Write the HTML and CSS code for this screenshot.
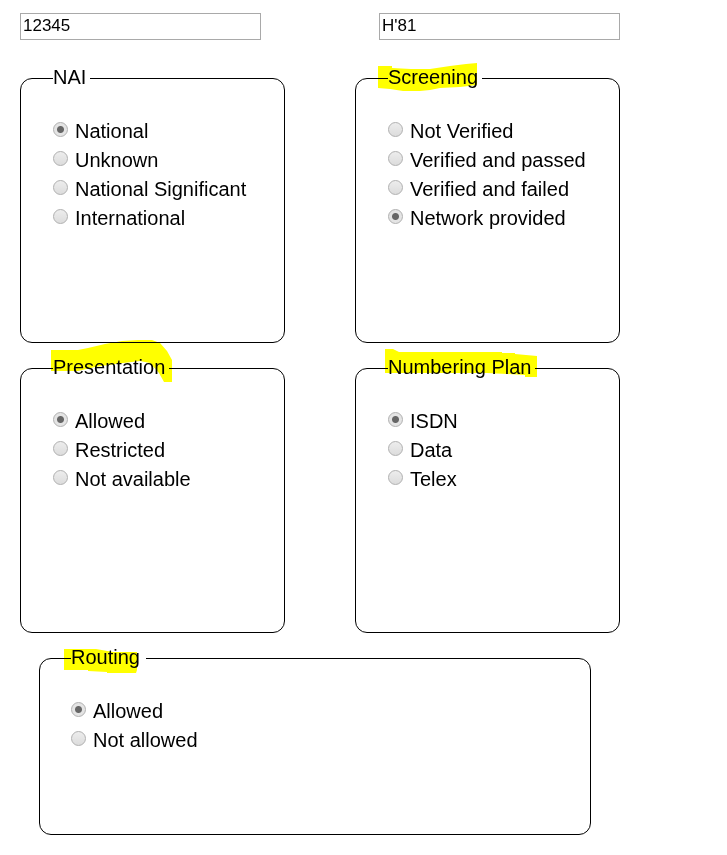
FILE: index.html
```html
<!DOCTYPE html>
<html lang="en">
<head>
<meta charset="utf-8">
<title>Number settings</title>
<link rel="stylesheet" href="styles.css">
</head>
<body>
<form class="settings">
  <div class="numbers">
    <input class="number" type="text" value="12345" aria-label="Number">
    <input class="number" type="text" value="H'81" aria-label="Code">
  </div>
  <div class="panels">
    <fieldset class="panel">
      <legend>NAI</legend>
      <label><input type="radio" name="nai" checked>National</label>
      <label><input type="radio" name="nai">Unknown</label>
      <label><input type="radio" name="nai">National Significant</label>
      <label><input type="radio" name="nai">International</label>
    </fieldset>
    <fieldset class="panel">
      <legend>Screening
        <svg class="marker" width="130" height="60" viewBox="-10 -20 130 60" aria-hidden="true"><path d="M-9 0H5V2L24 3H43L63 0L79 -2L90 -3V19L73 21L53 22L43 24L33 25H16L3 23L-9 22Z"/></svg>
      </legend>
      <label><input type="radio" name="screening">Not Verified</label>
      <label><input type="radio" name="screening">Verified and passed</label>
      <label><input type="radio" name="screening">Verified and failed</label>
      <label><input type="radio" name="screening" checked>Network provided</label>
    </fieldset>
    <fieldset class="panel">
      <legend>Presentation
        <svg class="marker" width="130" height="60" viewBox="-10 -20 130 60" aria-hidden="true"><path d="M-1 -6H26L36 -8L53 -12L70 -15L86 -16H100L108 -13L115 -5L120 4V26H112L107 17L98 7L88 5L63 8L43 11L26 15H-1Z"/></svg>
      </legend>
      <label><input type="radio" name="presentation" checked>Allowed</label>
      <label><input type="radio" name="presentation">Restricted</label>
      <label><input type="radio" name="presentation">Not available</label>
    </fieldset>
    <fieldset class="panel">
      <legend>Numbering Plan
        <svg class="marker" width="170" height="60" viewBox="-10 -20 170 60" aria-hidden="true"><path d="M-2 -7H6L12 -4H115V-3H128V-2L150 0V21H138V19L120 18L100 17H-2Z"/></svg>
      </legend>
      <label><input type="radio" name="plan" checked>ISDN</label>
      <label><input type="radio" name="plan">Data</label>
      <label><input type="radio" name="plan">Telex</label>
    </fieldset>
  </div>
  <fieldset class="panel routing">
    <legend>Routing
      <svg class="marker" width="130" height="60" viewBox="-10 -20 130 60" aria-hidden="true"><path d="M-6 3H26L43 6H67V24L66 27H37V26L18 25V24H-6Z"/></svg>
    </legend>
    <label><input type="radio" name="routing" checked>Allowed</label>
    <label><input type="radio" name="routing">Not allowed</label>
  </fieldset>
</form>
</body>
</html>
```

FILE: styles.css
```css
* {
  box-sizing: border-box;
}

body {
  margin: 0;
  padding: 13px 20px 20px;
  background: #fff;
  color: #000;
  font-family: "Liberation Sans", Arial, sans-serif;
  font-size: 20px;
}

.settings {
  max-width: 600px;
}

.numbers {
  display: flex;
  justify-content: space-between;
  gap: 20px;
  margin-bottom: 26px;
}

.number {
  flex: 0 1 241px;
  min-width: 0;
  height: 27px;
  padding: 0 2px 2px;
  border: 1px solid #a9a9a9;
  background: #fff;
  color: #000;
  font: 17px "Liberation Sans", Arial, sans-serif;
}

.panels {
  display: grid;
  grid-template-columns: 1fr 1fr;
  gap: 13px 70px;
}

.panel {
  min-width: 0;
  min-height: 277px;
  margin: 0;
  padding: 27px 10px 20px 32px;
  border: 1px solid #000;
  border-radius: 12px;
}

.panel legend {
  position: relative;
  padding: 0 4px 2px 0;
  line-height: 22px;
  white-space: nowrap;
}

.marker {
  position: absolute;
  top: -20px;
  left: -11px;
  fill: #ff0;
  mix-blend-mode: multiply;
  pointer-events: none;
}

.panel label {
  display: flex;
  align-items: center;
  gap: 7px;
  line-height: 29px;
}

.panel input {
  appearance: none;
  flex: none;
  width: 15px;
  height: 15px;
  margin: 0 0 4px;
  border: 1px solid #b0b0b0;
  border-radius: 50%;
  background: linear-gradient(#ededed, #dcdcdc);
}

.panel input:checked {
  background: radial-gradient(circle, #666 3px, #e4e4e4 4px);
}

.panel.routing {
  min-height: 189px;
  margin: 13px 29px 0 19px;
  padding-left: 31px;
}

.routing legend {
  padding-right: 6px;
}
```
